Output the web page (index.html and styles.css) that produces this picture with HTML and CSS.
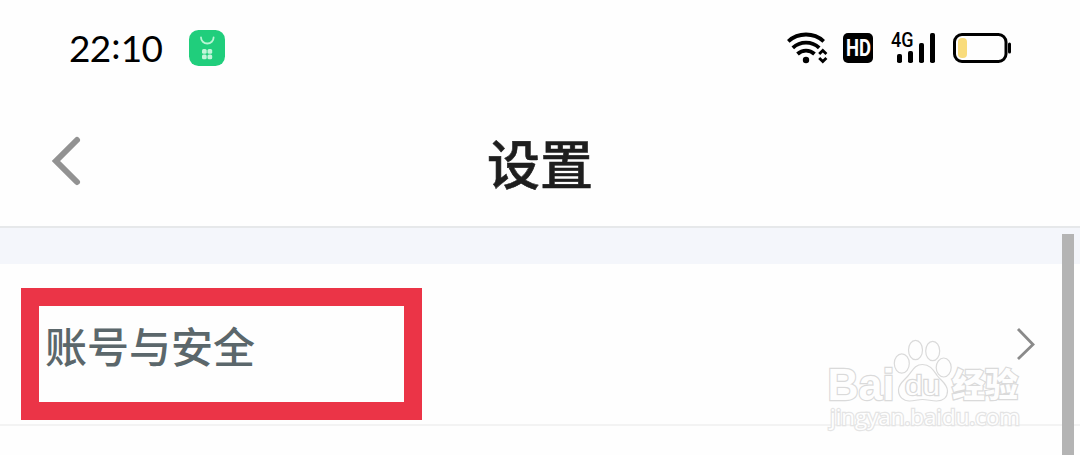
FILE: index.html
```html
<!DOCTYPE html>
<html lang="zh-CN">
<head>
  <meta charset="UTF-8" />
  <meta name="viewport" content="width=device-width, initial-scale=1.0" />
  <title>设置</title>
  <link rel="stylesheet" href="styles.css">
</head>
<body>
  <div class="status-bar">
    <div class="status-left">
      <span class="time">22<span class="colon">:</span>10</span>
      <svg class="app-icon" width="36" height="36" viewBox="0 0 36 36">
        <rect width="36" height="36" rx="9.5" fill="#20ce7c" />
        <path d="M12 7.5a6.300 6 0 0 0 12.600 0" fill="none" stroke="#b9f5d5" stroke-width="1.800" stroke-linecap="round" />
        <g fill="#c2f5da">
          <rect x="13" y="19" width="4.7" height="4.7" rx="1.5" />
          <rect x="18.5" y="19" width="4.7" height="4.7" rx="1.5" />
          <rect x="13" y="24.5" width="4.7" height="4.7" rx="1.5" />
          <rect x="18.5" y="24.5" width="4.7" height="4.7" rx="1.5" />
        </g>
      </svg>
    </div>
    <div class="status-right">
      <!-- wifi -->
      <svg width="40" height="32" viewBox="0 0 40 32">
        <g fill="none" stroke="#000" stroke-width="3.8">
          <path d="M1.300 9.300a26.500 26.500 0 0 1 35.400 0" />
          <path d="M5.800 15.800a19.500 19.500 0 0 1 26.400 0" />
          <path d="M10.500 22a12.500 12.500 0 0 1 17 0" />
        </g>
        <circle cx="19" cy="28" r="3.200" />
        <path d="M32.200 22l3.600-3.600 3.600 3.600M32.200 26l3.600 3.600 3.600-3.600" fill="none" stroke="#000" stroke-width="2.800" />
      </svg>
      <svg class="hd" width="30" height="30" viewBox="0 0 30 30">
        <rect width="30" height="30" rx="5" />
        <text class="hd-text" x="3" y="23" textLength="25" lengthAdjust="spacingAndGlyphs">HD</text>
      </svg>
      <!-- mobile signal -->
      <svg class="signal" width="46" height="34" viewBox="0 0 46 34">
        <text class="net-text" x="0" y="16" textLength="22.500" lengthAdjust="spacingAndGlyphs">4G</text>
        <rect x="6" y="23" width="5" height="9" rx="1.8" />
        <rect x="17" y="20" width="5" height="12" rx="1.8" />
        <rect x="28" y="12" width="5" height="20" rx="1.8" />
        <rect x="39" y="2" width="5" height="30" rx="1.8" />
      </svg>
      <svg class="battery" width="60" height="30" viewBox="0 0 60 30">
        <rect x="1.500" y="1.500" width="51.500" height="27" rx="7.500" fill="none" stroke="#000" stroke-width="3" />
        <path d="M56.500 11v8" stroke="#000" stroke-width="3" stroke-linecap="round" />
        <rect x="5" y="5" width="9" height="20" rx="4" fill="#f9dc7c" />
      </svg>
    </div>
  </div>

  <header class="header">
    <svg class="back" width="30" height="50" viewBox="0 0 30 50">
      <path d="M26 4L5 25l21 21" fill="none" stroke="#929292" stroke-width="6" stroke-linecap="round" />
    </svg>
    <h1 class="title">设置</h1>
  </header>

  <main class="list">
    <div class="row">
      <span class="row-label">账号与安全</span>
      <svg class="arrow" width="20" height="34" viewBox="0 0 20 34">
        <path d="M2 2l15 15.500L2 32" fill="none" stroke="#8a8a8a" stroke-width="2.800" />
      </svg>
      <div class="highlight"></div>
    </div>
  </main>

  <div class="scrollbar"></div>

  <svg class="watermark" width="206" height="100" viewBox="0 0 206 100">
    <g class="wm">
      <text class="wm-logo" x="2.500" y="64.500" textLength="67" lengthAdjust="spacingAndGlyphs">Bai</text>
      <ellipse cx="76.800" cy="28.500" rx="7.500" ry="9.700" />
      <ellipse cx="90.500" cy="15" rx="7" ry="9.700" />
      <ellipse cx="107.700" cy="16" rx="7" ry="9.700" />
      <ellipse cx="118.700" cy="32.500" rx="7.500" ry="9.500" />
      <path d="M97.500 29.500c8 0 11 6 15 11.500 4 5 10 8 10 15 0 7-5 10-11 10-5 0-9-1.500-14-1.500s-8 1.500-13 1.500c-6 0-11-4-11-11 0-6 5-9 9-13.500 5-5.500 7-12 15-12z" />
      <text class="wm-du" x="80" y="60" textLength="35" lengthAdjust="spacingAndGlyphs">du</text>
      <text class="wm-cn" x="127" y="61.500" textLength="66" lengthAdjust="spacingAndGlyphs">经验</text>
      <text class="wm-url" x="5" y="90" textLength="190" lengthAdjust="spacingAndGlyphs">jingyan.baidu.com</text>
    </g>
  </svg>
</body>
</html>
```
FILE: styles.css
```css
* {
  box-sizing: border-box;
  margin: 0;
  padding: 0;
}

body {
  font-family: "Noto Sans CJK SC", sans-serif;
  background-color: #fefefe;
  height: 100vh;
  overflow: hidden;
}

svg {
  display: block;
  overflow: visible;
}

.status-bar {
  display: flex;
  justify-content: space-between;
  align-items: center;
  height: 96px;
  padding: 0 67px 0 69px;
}

.status-left,
.status-right {
  display: flex;
  align-items: center;
}

.time {
  width: 120px;
  padding-bottom: 2px;
  font-family: Lato, sans-serif;
  font-size: 37px;
  line-height: 1;
  letter-spacing: -0.8px;
  color: #000;
}

.colon {
  display: inline-block;
  margin: 0 1px;
  transform: translateY(-3px);
}

.hd {
  margin-left: 16px;
}

.hd-text {
  font: 700 24px Roboto, sans-serif;
  fill: #fff;
}

.signal {
  margin-left: 18px;
}

.net-text {
  font: 500 20px Roboto, sans-serif;
}

.battery {
  margin-left: 16px;
}

.header {
  display: flex;
  align-items: center;
  height: 132px;
  padding: 0 51px;
  border-bottom: 2px solid #e6e8ea;
}

.title {
  flex: 1;
  padding: 2px 30px 0 0;
  font-size: 53px;
  font-weight: 500;
  line-height: 1;
  text-align: center;
  color: #1e1e1e;
  -webkit-text-stroke: 0.6px #1e1e1e;
}

.list {
  border-top: 36px solid #f4f6fb;
}

.row {
  position: relative;
  display: flex;
  justify-content: space-between;
  align-items: center;
  height: 162px;
  padding: 0 44px 0 45px;
  border-bottom: 2px solid #f3f3f3;
}

.row-label {
  padding-top: 2px;
  font-size: 42px;
  font-weight: 500;
  line-height: 1;
  color: #5b676b;
}

/* red frame around the first item */
.highlight {
  position: absolute;
  top: 24px;
  left: 21px;
  width: 401px;
  height: 132px;
  border: 18px solid #eb3447;
}

.scrollbar {
  position: absolute;
  top: 234px;
  right: 6px;
  bottom: 0;
  width: 12px;
  background-color: #b4b4b4;
}

.watermark {
  position: absolute;
  top: 335px;
  left: 825px;
}

.wm {
  fill: #fefefe;
  stroke: #dadada;
  stroke-width: 1.2;
}

.wm text {
  paint-order: stroke;
  stroke-width: 2.4;
}

.wm-logo {
  font: 700 45px "Liberation Sans", sans-serif;
}

.wm-du {
  font: 400 27px "Liberation Sans", sans-serif;
}

.wm-cn {
  font: 900 33px "Noto Sans CJK SC", sans-serif;
}

.wm .wm-url {
  font: 400 22px "Open Sans", sans-serif;
  stroke: #e4e4e4;
}
```
